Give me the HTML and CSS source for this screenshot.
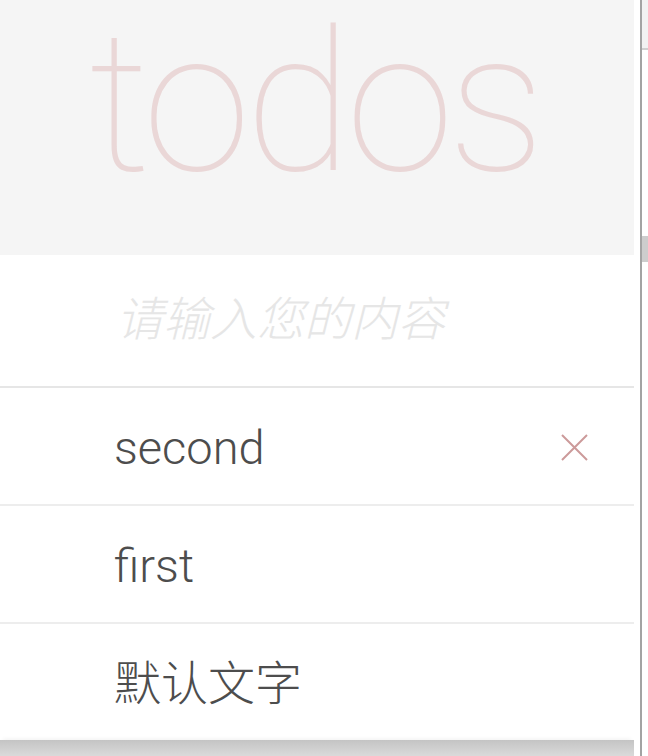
FILE: index.html
```html
<!DOCTYPE html>
<html lang="zh-CN">
<head>
<meta charset="utf-8">
<title>todos</title>
<link rel="stylesheet" href="styles.css">
</head>
<body>
<div class="page">
  <div class="app">
    <header class="header">
      <h1 class="title">todos</h1>
    </header>
    <section class="panel">
      <div class="new-row">
        <input class="new-todo" type="text" placeholder="请输入您的内容">
      </div>
      <ul class="list">
        <li class="item">
          <span class="label">second</span>
          <button class="destroy" type="button" aria-label="delete">
            <svg viewBox="0 0 27 27" width="27" height="27"><path d="M1 1L26 26M26 1L1 26" fill="none" stroke="#cc9a9a" stroke-width="2"/></svg>
          </button>
        </li>
        <li class="item"><span class="label">first</span></li>
        <li class="item"><span class="label">默认文字</span></li>
      </ul>
      <div class="stack"></div>
    </section>
  </div>
  <aside class="edge">
    <div class="gap"></div>
    <div class="rule"></div>
    <div class="bar">
      <div class="bar-top"></div>
      <div class="thumb"></div>
    </div>
  </aside>
</div>
</body>
</html>
```
FILE: styles.css
```css
* { box-sizing: border-box; }
html, body { margin: 0; padding: 0; }
body {
  background: #ffffff;
  font-family: "Roboto", "Liberation Sans", "Noto Sans CJK SC", sans-serif;
  overflow: hidden;
}
.page {
  display: flex;
  width: 648px;
  height: 756px;
}
.app {
  width: 634px;
  display: flex;
  flex-direction: column;
}
.header {
  height: 255px;
  background: #f5f5f5;
  padding-top: 3px;
}
.title {
  margin: 0;
  font-family: "Roboto", "Liberation Sans", sans-serif;
  font-weight: 100;
  font-size: 196px;
  line-height: 200px;
  text-align: center;
  letter-spacing: -6px;
  color: rgba(175, 47, 47, 0.15);
  padding-right: 6px;
}
.panel {
  background: #ffffff;
  display: flex;
  flex-direction: column;
  flex: 1;
}
.new-row {
  height: 133px;
  border-bottom: 2px solid #e6e6e6;
}
.new-todo {
  display: block;
  width: 100%;
  height: 100%;
  border: none;
  outline: none;
  background: transparent;
  padding: 0 0 2px 116px;
  font-family: "Roboto", "Noto Sans CJK SC", sans-serif;
  font-size: 47px;
  font-style: italic;
  font-weight: 300;
  color: #4d4d4d;
}
.new-todo::placeholder {
  color: #e6e6e6;
  font-style: italic;
}
.list {
  list-style: none;
  margin: 0;
  padding: 0;
}
.item {
  height: 118px;
  display: flex;
  align-items: center;
  padding-left: 114px;
  padding-top: 3px;
  border-bottom: 2px solid #ededed;
  font-size: 47px;
  font-weight: 300;
  color: #4d4d4d;
  font-family: "Roboto", "Noto Sans CJK SC", sans-serif;
}
.item:last-child {
  height: 116px;
  border-bottom: none;
}
.label { line-height: 1; }
.destroy {
  margin-left: auto;
  margin-right: 46px;
  width: 27px;
  height: 27px;
  padding: 0;
  border: none;
  background: transparent;
  display: flex;
}
.stack {
  flex: 1;
  background: linear-gradient(#c4c4c4, #dadada);
  box-shadow: 0 -4px 4px -3px rgba(0, 0, 0, 0.06);
}
.edge {
  width: 14px;
  display: flex;
}
.gap {
  width: 6px;
  background: #ffffff;
}
.rule {
  width: 2px;
  background: #a3a3a3;
}
.bar {
  flex: 1;
  display: flex;
  flex-direction: column;
}
.bar-top {
  height: 50px;
  background: #f2f2f2;
  border-bottom: 2px solid #d0d0d0;
}
.thumb {
  margin-top: 186px;
  height: 26px;
  background: #cdcdcd;
}
```
